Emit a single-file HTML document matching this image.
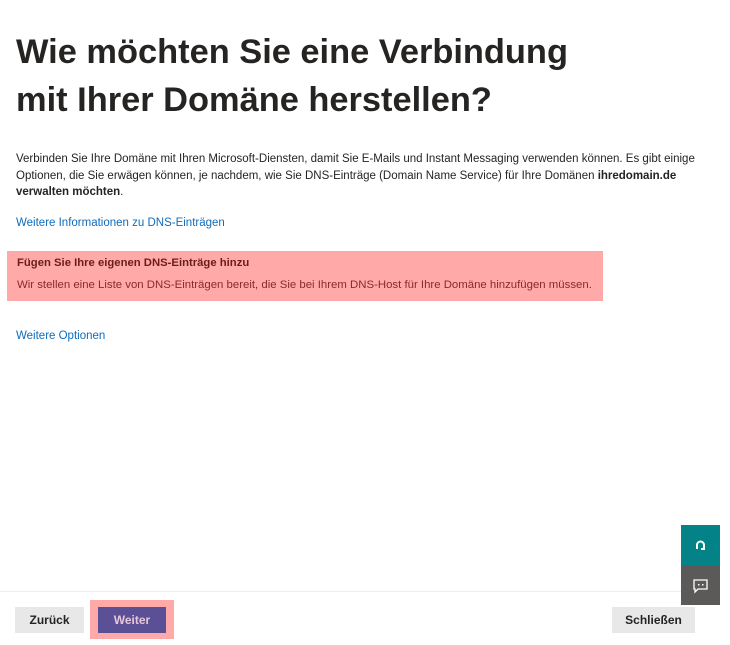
<!DOCTYPE html>
<html><head><meta charset="utf-8"><style>
body{margin:0;width:730px;height:645px;background:#fff;font-family:"Liberation Sans",sans-serif;position:relative;overflow:hidden;color:#252423}
h1{position:absolute;left:16px;top:28px;margin:0;font-size:34.4px;line-height:48px;font-weight:bold;color:#252423;letter-spacing:0}
.p{position:absolute;left:16px;top:151px;width:700px;font-size:11.5px;line-height:16.5px}
.a{position:absolute;left:16px;font-size:11.5px;color:#0f6cbd}
.hl{position:absolute;left:7px;top:251px;width:596px;height:50px;background:#ffa9a9}
.hl b{position:absolute;left:10px;top:6px;font-size:11.3px;color:#6b1c1c}
.hl span{position:absolute;left:10px;top:28px;font-size:11.4px;color:#8a2a2a}
.div{position:absolute;left:0;top:591px;width:681px;height:1px;background:#eee}
.btn{position:absolute;top:607px;height:26px;line-height:26px;text-align:center;font-size:12px;font-weight:bold;background:#e8e8e8;color:#252423}
</style></head><body>
<h1>Wie möchten Sie eine Verbindung<br>mit Ihrer Domäne herstellen?</h1>
<div class="p">Verbinden Sie Ihre Domäne mit Ihren Microsoft-Diensten, damit Sie E-Mails und Instant Messaging verwenden können. Es gibt einige Optionen, die Sie erwägen können, je nachdem, wie Sie DNS-Einträge (Domain Name Service) für Ihre Domänen <b>ihredomain.de verwalten möchten</b>.</div>
<div class="a" style="top:217px">Weitere Informationen zu DNS-Einträgen</div>
<div class="hl"><b>Fügen Sie Ihre eigenen DNS-Einträge hinzu</b><span>Wir stellen eine Liste von DNS-Einträgen bereit, die Sie bei Ihrem DNS-Host für Ihre Domäne hinzufügen müssen.</span></div>
<div class="a" style="top:330px">Weitere Optionen</div>
<div class="div"></div>
<div style="position:absolute;left:681px;top:525px;width:39px;height:40px;background:#038387"><svg width="39" height="40"><path d="M16 24v-4a3.5 3.5 0 0 1 7 0v4h-3" fill="none" stroke="#fff" stroke-width="2"/></svg></div>
<div style="position:absolute;left:681px;top:565px;width:39px;height:40px;background:#5c5a58"><svg width="39" height="40"><path d="M13 15h13v9h-9l-3 3v-3h-1z" fill="none" stroke="#fff" stroke-width="1.3"/><rect x="17" y="19" width="1.5" height="1.5" fill="#fff"/><rect x="21" y="19" width="1.5" height="1.5" fill="#fff"/></svg></div>
<div class="btn" style="left:15px;width:69px">Zurück</div>
<div style="position:absolute;left:90px;top:600px;width:84px;height:39px;background:#ffa9a9"></div>
<div class="btn" style="left:98px;width:68px;background:#5b4f96;color:#e8c7dc">Weiter</div>
<div class="btn" style="left:612px;width:83px">Schließen</div>
</body></html>
